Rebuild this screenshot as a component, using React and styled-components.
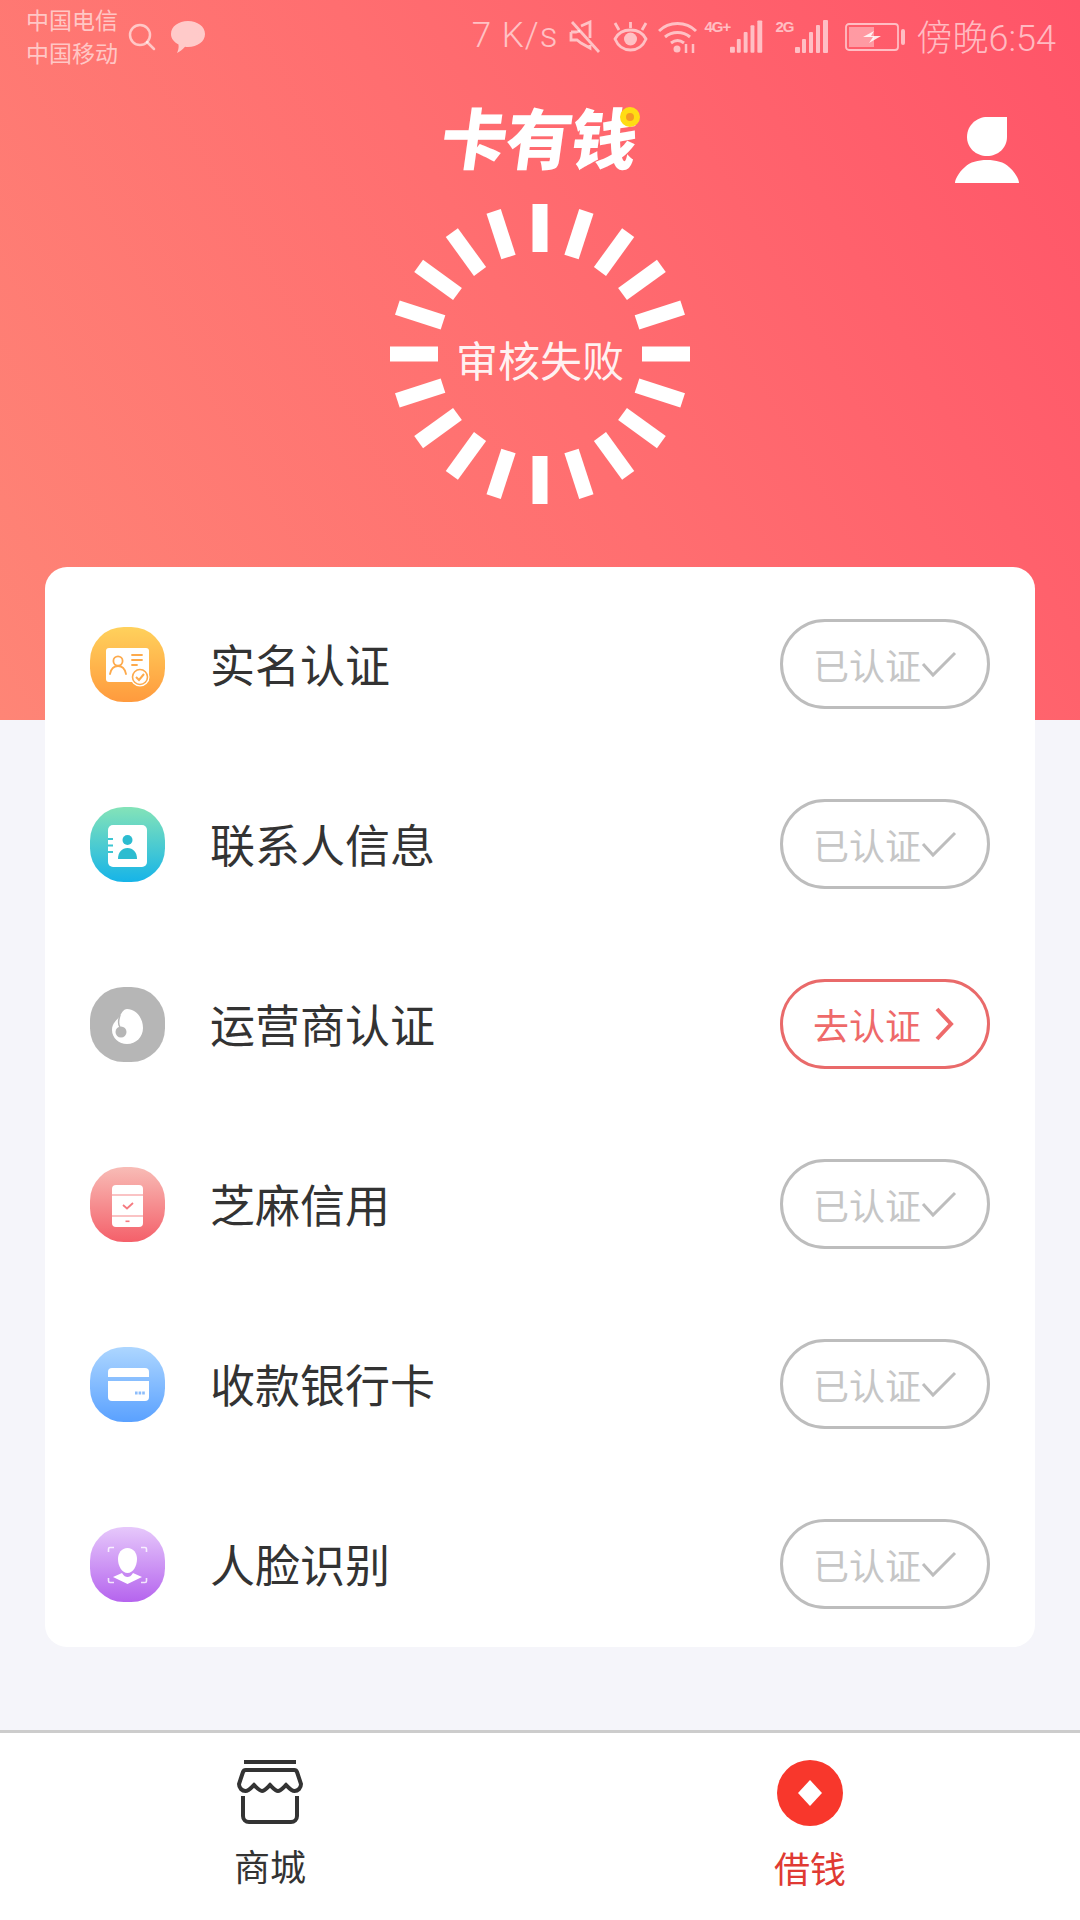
import styled, { createGlobalStyle } from 'styled-components'

const GlobalStyle = createGlobalStyle`
    html, body {
        margin: 0;
        padding: 0;
        background: #f5f5fa;
        font-family: "Noto Sans CJK SC", "Noto Sans", sans-serif;
    }
`

const statusInk = 'rgba(255,255,255,0.6)'

const items = [
    { name: '实名认证', icon: 'id', done: true },
    { name: '联系人信息', icon: 'contact', done: true },
    { name: '运营商认证', icon: 'carrier', done: false },
    { name: '芝麻信用', icon: 'sesame', done: true },
    { name: '收款银行卡', icon: 'bank', done: true },
    { name: '人脸识别', icon: 'face', done: true },
]

const gradients = {
    id: ['#ffd15c', '#ff9a3d'],
    contact: ['#84e3b8', '#16b4e8'],
    carrier: ['#b6b6b6', '#b6b6b6'],
    sesame: ['#f8bcb6', '#f4606a'],
    bank: ['#add6ff', '#5aa1ff'],
    face: ['#e6c8fb', '#b564ee'],
}

function Glyph({ kind }) {
    if (kind === 'id') {
        return (
            <svg width="75" height="75" viewBox="0 0 75 75">
                <rect x="16" y="21" width="43" height="34" rx="3" fill="#fff" />
                <g fill="none" stroke="#fdaa4c" strokeWidth="1.8" strokeLinecap="round">
                    <circle cx="28" cy="34" r="4.6" />
                    <path d="M20 47c1-5 4-8 8-8s7 3 8 8" />
                    <path d="M42 28h10M42 33h10M42 38h5" />
                </g>
                <circle cx="50" cy="50" r="9.5" fill="#fff" />
                <circle cx="50" cy="50" r="7.5" fill="none" stroke="#fdaa4c" strokeWidth="1.6" />
                <path d="M46 50l3 3 5-6" fill="none" stroke="#fdaa4c" strokeWidth="2" />
            </svg>
        )
    }
    if (kind === 'contact') {
        return (
            <svg width="75" height="75" viewBox="0 0 75 75">
                <rect x="18" y="18" width="39" height="42" rx="5" fill="#fff" />
                <path d="M18 32h5M18 38.500h5M18 45h5" stroke="#3cc6d2" strokeWidth="1.8" />
                <circle cx="37.500" cy="33" r="5" fill="#2cbcd0" />
                <path d="M28 52c0-7 4-11 9.500-11S47 45 47 52z" fill="#2cbcd0" />
            </svg>
        )
    }
    if (kind === 'carrier') {
        return (
            <svg width="75" height="75" viewBox="0 0 75 75">
                <path d="M37 22c9 0 16 9 16 19 0 9-7 16-16 16-8 0-15-6-15-14 0-7 5-10 8-14 2-4 4-7 7-7z" fill="#fff" />
                <circle cx="31" cy="45" r="5.500" fill="#b6b6b6" />
                <path d="M30 28c-1 4-3 8 0 12" fill="none" stroke="#b6b6b6" strokeWidth="1.5" />
            </svg>
        )
    }
    if (kind === 'sesame') {
        return (
            <svg width="75" height="75" viewBox="0 0 75 75">
                <rect x="22" y="18" width="31" height="42" rx="4" fill="#fff" />
                <path d="M22 28h31M22 49h31" stroke="#f6878a" strokeWidth="1.2" />
                <path d="M33 38l4 3.500 6-5.500" fill="none" stroke="#f57a80" strokeWidth="1.8" />
                <rect x="35.500" y="53.500" width="4" height="1.600" fill="#f57a80" />
            </svg>
        )
    }
    if (kind === 'bank') {
        return (
            <svg width="75" height="75" viewBox="0 0 75 75">
                <path d="M18 30v-5a4 4 0 0 1 4-4h33a4 4 0 0 1 4 4v5z" fill="#fff" />
                <path d="M18 34h41v16a4 4 0 0 1-4 4H22a4 4 0 0 1-4-4z" fill="#fff" />
                <path d="M45 46h10" stroke="#8dbdfb" strokeWidth="3" strokeDasharray="2.600 1" />
            </svg>
        )
    }
    return (
        <svg width="75" height="75" viewBox="0 0 75 75">
            <g fill="none" stroke="#fff" strokeOpacity="0.8" strokeWidth="1.600">
                <path d="M24 20.500h-4a1.500 1.500 0 0 0-1.500 1.500v3M51 20.500h4a1.500 1.500 0 0 1 1.500 1.500v3" />
                <path d="M18.500 51v3a1.500 1.500 0 0 0 1.500 1.500h4M56.500 51v3a1.500 1.500 0 0 1-1.500 1.500h-4" />
            </g>
            <path d="M37.500 21c6 0 9.500 5 9.500 11 0 7-4 14-9.500 14S28 39 28 32c0-6 3.500-11 9.500-11z" fill="#fff" />
            <path d="M23 50l9-4c2 3 3.500 4 5.500 4s3.500-1 5.500-4l9 4-14.500 7z" fill="#fff" />
        </svg>
    )
}

function Signal({ label, left, width }) {
    const bars = [
        [0, 46, 5, 6],
        [7, 38, 4, 14],
        [14, 31, 4, 21],
        [21, 24, 4, 28],
        [28, 19, 5, 33],
    ]
    return (
        <SignalBox $left={left} $w={width}>
            <SignalLabel>{label}</SignalLabel>
            <svg width="34" height="34" viewBox="0 19 34 34" fill={statusInk}>
                {bars.map((b) => (
                    <rect key={b[0]} x={b[0]} y={b[1]} width={b[2]} height={b[3]} rx="1" />
                ))}
            </svg>
        </SignalBox>
    )
}

export default function App() {
    const spokes = Array.from({ length: 20 }, (_, i) => i * 18)

    return (
        <>
            <GlobalStyle />
            <Page>
                <Hero>
                    <StatusBar>
                        <StatusLeft>
                            <Carriers>
                                <span>中国电信</span>
                                <span>中国移动</span>
                            </Carriers>
                            <StatusIcon $left={10} width="28" height="28" viewBox="0 0 28 28" fill="none" stroke={statusInk} strokeWidth="2.500">
                                <circle cx="12" cy="12" r="10" />
                                <path d="M19 19l7 7" strokeLinecap="round" />
                            </StatusIcon>
                            <StatusIcon $left={15} width="34" height="32" viewBox="0 0 34 32" fill="rgba(255,255,255,0.62)">
                                <path d="M17 0c9.500 0 17 5.500 17 13s-7.500 13-17 13c-1 0-2 0-3-.2C12 28 9 31 6 32c1-2 2-5 1.500-8.500C3 21 0 17.500 0 13 0 5.500 7.500 0 17 0z" />
                            </StatusIcon>
                        </StatusLeft>
                        <StatusRight>
                            <Speed>7 K/s</Speed>
                            <StatusIcon $left={10} width="32" height="34" viewBox="0 0 32 34" fill="none" stroke={statusInk} strokeWidth="2.800">
                                <path d="M2 12h5l4 -1M12 6l9-4v16M21 25v3l-9-5-4-3H2v-8" />
                                <path d="M3 2l27 30" />
                            </StatusIcon>
                            <StatusIcon $left={11} width="37" height="30" viewBox="0 0 37 30" fill="none" stroke={statusInk} strokeWidth="2.800">
                                <path d="M3 17c3-6 9-9 15.500-9S31 11 34 17c-3 7-9 11-15.500 11S6 24 3 17z" />
                                <circle cx="18.500" cy="17" r="6.500" fill={statusInk} stroke="none" />
                                <path d="M7 8L3 1M18.500 6V0M30 8l4-7" />
                            </StatusIcon>
                            <StatusIcon $left={9} width="40" height="32" viewBox="0 0 40 32" fill="none" stroke={statusInk} strokeWidth="3">
                                <path d="M1 10c10-10 27-10 37 0M7 16c7-6 18-6 25 0M13 22c4-3 9-3 13 0" />
                                <circle cx="19" cy="28" r="3.500" fill={statusInk} stroke="none" />
                                <path d="M28 23v9M35 23v9" strokeWidth="2.500" />
                            </StatusIcon>
                            <Signal label="4G+" left={7} width={59} />
                            <Signal label="2G" left={12} width={53} />
                            <StatusIcon $left={16} width="61" height="28" viewBox="0 0 61 28">
                                <rect x="1" y="1" width="52" height="26" rx="3" fill="none" stroke={statusInk} strokeWidth="1.800" />
                                <rect x="4" y="4" width="25" height="20" fill="rgba(255,255,255,0.38)" />
                                <path d="M18 14l11-6-3 5h10l-12 7 4-6z" fill="rgba(255,255,255,0.85)" />
                                <rect x="56" y="6" width="4" height="16" rx="2" fill={statusInk} />
                            </StatusIcon>
                            <Clock>傍晚6:54</Clock>
                        </StatusRight>
                    </StatusBar>

                    <Header>
                        <span />
                        <Logo>
                            <LogoText>卡有钱</LogoText>
                            <LogoCoin />
                        </Logo>
                        <UserIcon width="64" height="66" viewBox="0 0 64 66" fill="#fff">
                            <path d="M12 20C12 8 22 0 32 0h20v20c0 11-9 19-20 19S12 31 12 20z" />
                            <path d="M0 66c0-3 3-10 10-16 5-5 13-7 22-7s17 2 22 7c7 6 10 13 10 16z" />
                        </UserIcon>
                    </Header>

                    <Ring>
                        <svg width="300" height="300" viewBox="-150 -150 300 300">
                            {spokes.map((deg) => (
                                <rect key={deg} x="-7.500" y="-150" width="15" height="48" fill="#fff" transform={`rotate(${deg})`} />
                            ))}
                        </svg>
                        <RingLabel>审核失败</RingLabel>
                    </Ring>
                </Hero>

                <Card>
                    {items.map((item) => (
                        <Row key={item.name}>
                            <IconTile $from={gradients[item.icon][0]} $to={gradients[item.icon][1]}>
                                <Glyph kind={item.icon} />
                            </IconTile>
                            <RowName>{item.name}</RowName>
                            <Pill $done={item.done}>
                                {item.done ? '已认证' : '去认证'}
                                {item.done ? (
                                    <svg width="36" height="28" viewBox="0 0 36 28" fill="none" stroke="#bdbdbd" strokeWidth="3">
                                        <path d="M2 14l10 11L34 3" />
                                    </svg>
                                ) : (
                                    <svg width="36" height="36" viewBox="0 0 36 36" fill="none" stroke="#ee6a6a" strokeWidth="4">
                                        <path d="M16 3l14 15-14 15" />
                                    </svg>
                                )}
                            </Pill>
                        </Row>
                    ))}
                </Card>

                <TabBar>
                    <Tab>
                        <svg width="66" height="64" viewBox="0 0 66 64" fill="none" stroke="#333" strokeWidth="4">
                            <path d="M7 2h52" />
                            <path d="M9 10H57a3 3 0 0 1 3 2l4 12c0 4-3 7-6.500 7S52 28 49 25c-3 3-5.500 6-8 6s-5-3-8-6c-3 3-5.500 6-8 6s-5-3-8-6c-3 3-5 6-8.500 6S2 28 2 24l4-12a3 3 0 0 1 3-2z" />
                            <path d="M6 36v20a6 6 0 0 0 6 6h42a6 6 0 0 0 6-6V36" />
                        </svg>
                        <TabLabel>商城</TabLabel>
                    </Tab>
                    <Tab>
                        <svg width="66" height="66" viewBox="0 0 66 66">
                            <circle cx="33" cy="33" r="33" fill="#f8372c" />
                            <path d="M33 20l12 13-12 13-12-13z" fill="#fff" />
                        </svg>
                        <TabLabel $active>借钱</TabLabel>
                    </Tab>
                </TabBar>
            </Page>
        </>
    )
}

const Page = styled.div`
    display: flex;
    flex-direction: column;
    width: 1080px;
    height: 1920px;
    overflow: hidden;
    background: #f5f5fa;
`

const Hero = styled.div`
    display: flex;
    flex-direction: column;
    flex-shrink: 0;
    height: 720px;
    background: linear-gradient(60deg, #fe8576 0%, #ff6e70 50%, #ff5468 100%);
`

const StatusBar = styled.div`
    display: flex;
    justify-content: space-between;
    align-items: center;
    height: 74px;
    padding: 0 24px 0 26px;
`

const StatusLeft = styled.div`
    display: flex;
    align-items: center;
`

const StatusRight = styled.div`
    display: flex;
    align-items: center;
`

const Carriers = styled.div`
    display: flex;
    flex-direction: column;
    font-size: 23px;
    line-height: 33px;
    color: ${statusInk};
    margin-top: -2px;
`

const StatusIcon = styled.svg`
    flex-shrink: 0;
    margin-left: ${(p) => p.$left}px;
`

const Speed = styled.span`
    margin-top: -4px;
    font-family: Roboto, sans-serif;
    font-weight: 300;
    font-size: 35px;
    letter-spacing: 1px;
    color: ${statusInk};
`

const Clock = styled.span`
    margin: -4px 0 0 11px;
    font-family: Roboto, "Noto Sans CJK SC", sans-serif;
    font-weight: 300;
    font-size: 36px;
    color: ${statusInk};
`

const SignalBox = styled.div`
    display: flex;
    align-items: flex-start;
    justify-content: space-between;
    width: ${(p) => p.$w}px;
    height: 34px;
    margin-left: ${(p) => p.$left}px;
`

const SignalLabel = styled.span`
    font-family: "Liberation Sans", sans-serif;
    font-size: 15px;
    line-height: 14px;
    font-weight: 700;
    letter-spacing: -1px;
    color: ${statusInk};
`

const Header = styled.div`
    display: grid;
    grid-template-columns: 1fr auto 1fr;
    margin-top: 22px;
    padding: 0 61px;
`

const Logo = styled.div`
    position: relative;
    width: 197px;
    height: 78px;
`

const LogoText = styled.div`
    font-size: 66px;
    line-height: 78px;
    font-weight: 900;
    letter-spacing: -1px;
    color: #fff;
    white-space: nowrap;
    transform: skewX(-8deg);
`

const LogoCoin = styled.div`
    position: absolute;
    right: -1px;
    top: 11px;
    width: 20px;
    height: 20px;
    box-sizing: border-box;
    border-radius: 50%;
    border: 6px solid #ffdc14;
    background: #f59a23;
`

const UserIcon = styled.svg`
    justify-self: end;
    margin-top: 21px;
`

const Ring = styled.div`
    display: grid;
    align-self: center;
    place-items: center;
    width: 300px;
    height: 300px;
    margin-top: 21px;
    & > * {
        grid-area: 1 / 1;
    }
`

const RingLabel = styled.div`
    margin-top: 10px;
    font-size: 42px;
    line-height: 50px;
    color: rgba(255, 255, 255, 0.92);
`

const Card = styled.div`
    display: flex;
    flex-direction: column;
    gap: 16px;
    box-sizing: border-box;
    flex-shrink: 0;
    width: 990px;
    height: 1080px;
    margin: -153px 0 0 45px;
    padding-top: 15px;
    background: #fff;
    border-radius: 22px;
`

const Row = styled.div`
    display: flex;
    align-items: center;
    flex-shrink: 0;
    height: 164px;
    padding: 0 45px;
`

const IconTile = styled.div`
    flex-shrink: 0;
    width: 75px;
    height: 75px;
    border-radius: 45%;
    background: linear-gradient(180deg, ${(p) => p.$from}, ${(p) => p.$to});
    svg {
        display: block;
    }
`

const RowName = styled.div`
    flex: 1;
    margin: 0 0 1px 45px;
    font-size: 45px;
    color: #333;
`

const Pill = styled.div`
    display: flex;
    align-items: center;
    box-sizing: border-box;
    width: 210px;
    height: 90px;
    padding-left: 30px;
    border: 3px solid ${(p) => (p.$done ? '#bdbdbd' : '#e96a6a')};
    border-radius: 45px;
    font-size: 36px;
    color: ${(p) => (p.$done ? '#c6c6c6' : '#ee6a6a')};
    svg {
        flex-shrink: 0;
    }
`

const TabBar = styled.div`
    display: grid;
    grid-template-columns: 1fr 1fr;
    box-sizing: border-box;
    height: 190px;
    margin-top: auto;
    padding-top: 27px;
    border-top: 3px solid #ccc;
    background: #fff;
`

const Tab = styled.div`
    display: flex;
    flex-direction: column;
    align-items: center;
`

const TabLabel = styled.div`
    margin-top: 19px;
    font-size: 36px;
    line-height: 44px;
    color: ${(p) => (p.$active ? '#e03a33' : '#333')};
`
